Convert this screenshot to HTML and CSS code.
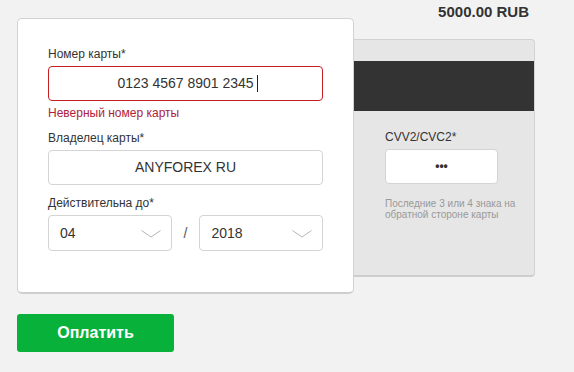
FILE: index.html
```html
<!DOCTYPE html>
<html lang="ru">
<head>
  <meta charset="UTF-8">
  <meta name="viewport" content="width=device-width, initial-scale=1.0">
  <title>Оплата картой</title>
  <link rel="stylesheet" href="styles.css">
</head>
<body>

  <div class="page">
    <div class="total">5000.00 RUB</div>

    <div class="cards">
      <div class="card-front">
        <div class="field">
          <label class="label">Номер карты*</label>
          <div class="input input-error">0123 4567 8901 2345<span class="caret"></span></div>
          <p class="error">Неверный номер карты</p>
        </div>

        <div class="field">
          <label class="label">Владелец карты*</label>
          <div class="input">ANYFOREX RU</div>
        </div>

        <div class="field">
          <label class="label">Действительна до*</label>
          <div class="expiry">
            <div class="select">
              <span>04</span>
              <svg class="chevron" width="20" height="8" viewBox="0 0 20 8"><path d="M0.5 0.5 L10 7 L19.5 0.5" fill="none" stroke="#b5b5b5" stroke-width="1"/></svg>
            </div>
            <span class="slash">/</span>
            <div class="select">
              <span>2018</span>
              <svg class="chevron" width="20" height="8" viewBox="0 0 20 8"><path d="M0.5 0.5 L10 7 L19.5 0.5" fill="none" stroke="#b5b5b5" stroke-width="1"/></svg>
            </div>
          </div>
        </div>
      </div>

      <div class="card-back">
        <div class="stripe"></div>
        <div class="back-body">
          <label class="label">CVV2/CVC2*</label>
          <div class="input cvv">•••</div>
          <p class="hint">Последние 3 или 4 знака на обратной стороне карты</p>
        </div>
      </div>
    </div>

    <button class="pay-btn">Оплатить</button>
  </div>

</body>
</html>
```

FILE: styles.css
```css
* {
  margin: 0;
  padding: 0;
  box-sizing: border-box;
}

body {
  font-family: 'Liberation Sans', Arial, sans-serif;
  background-color: #f2f2f2;
  color: #333;
}

.page {
  width: 512px;
  margin-left: 17px;
}

.total {
  height: 18px;
  padding-top: 5px;
  line-height: 13px;
  font-size: 15px;
  font-weight: bold;
  text-align: right;
  color: #333;
}

.cards {
  display: flex;
  align-items: flex-start;
}

.card-front {
  position: relative;
  z-index: 1;
  flex-shrink: 0;
  width: 337px;
  height: 276px;
  padding: 28px 30px 0;
  background-color: #fff;
  border: 1px solid #d2d2d2;
  border-bottom: 2px solid #cfcfcf;
  border-radius: 5px;
}

.field {
  margin-bottom: 11px;
}

.label {
  display: block;
  font-size: 12px;
  line-height: 14px;
  color: #333;
  margin-bottom: 5px;
}

.input {
  height: 35px;
  border: 1px solid #d4d4d4;
  border-radius: 4px;
  background-color: #fff;
  font-size: 14px;
  line-height: 33px;
  text-align: center;
  color: #333;
}

.input-error {
  border-color: #c41f24;
}

.caret {
  display: inline-block;
  width: 1px;
  height: 17px;
  margin-left: 3px;
  margin-right: -4px;
  background-color: #222;
  vertical-align: -4px;
}

.error {
  margin-top: 5px;
  font-size: 12px;
  line-height: 14px;
  color: #b01c3a;
}

.expiry {
  display: flex;
  align-items: center;
}

.select {
  display: flex;
  align-items: center;
  justify-content: space-between;
  width: 124px;
  height: 36px;
  padding: 0 10px 0 11px;
  border: 1px solid #d4d4d4;
  border-radius: 4px;
  font-size: 14px;
}

.chevron {
  margin-top: 1px;
}

.slash {
  width: 28px;
  text-align: center;
  font-size: 14px;
  color: #555;
}

.card-back {
  flex-shrink: 0;
  width: 201px;
  height: 238px;
  margin-top: 21px;
  margin-left: -20px;
  background-color: #e6e6e6;
  border: 1px solid #d2d2d2;
  border-bottom: 2px solid #cdcdcd;
  border-radius: 4px;
  overflow: hidden;
}

.stripe {
  height: 50px;
  margin-top: 21px;
  background-color: #333;
}

.back-body {
  padding: 19px 0 0 50px;
}

.cvv {
  width: 113px;
  font-size: 12px;
  font-weight: bold;
}

.hint {
  margin-top: 14px;
  width: 140px;
  font-size: 10px;
  line-height: 11px;
  color: #999;
}

.pay-btn {
  display: block;
  width: 157px;
  height: 38px;
  margin-top: 20px;
  border: none;
  border-radius: 3px;
  background-color: #08b23a;
  color: #fff;
  font-family: 'Liberation Sans', Arial, sans-serif;
  font-size: 16px;
  font-weight: bold;
}
```
